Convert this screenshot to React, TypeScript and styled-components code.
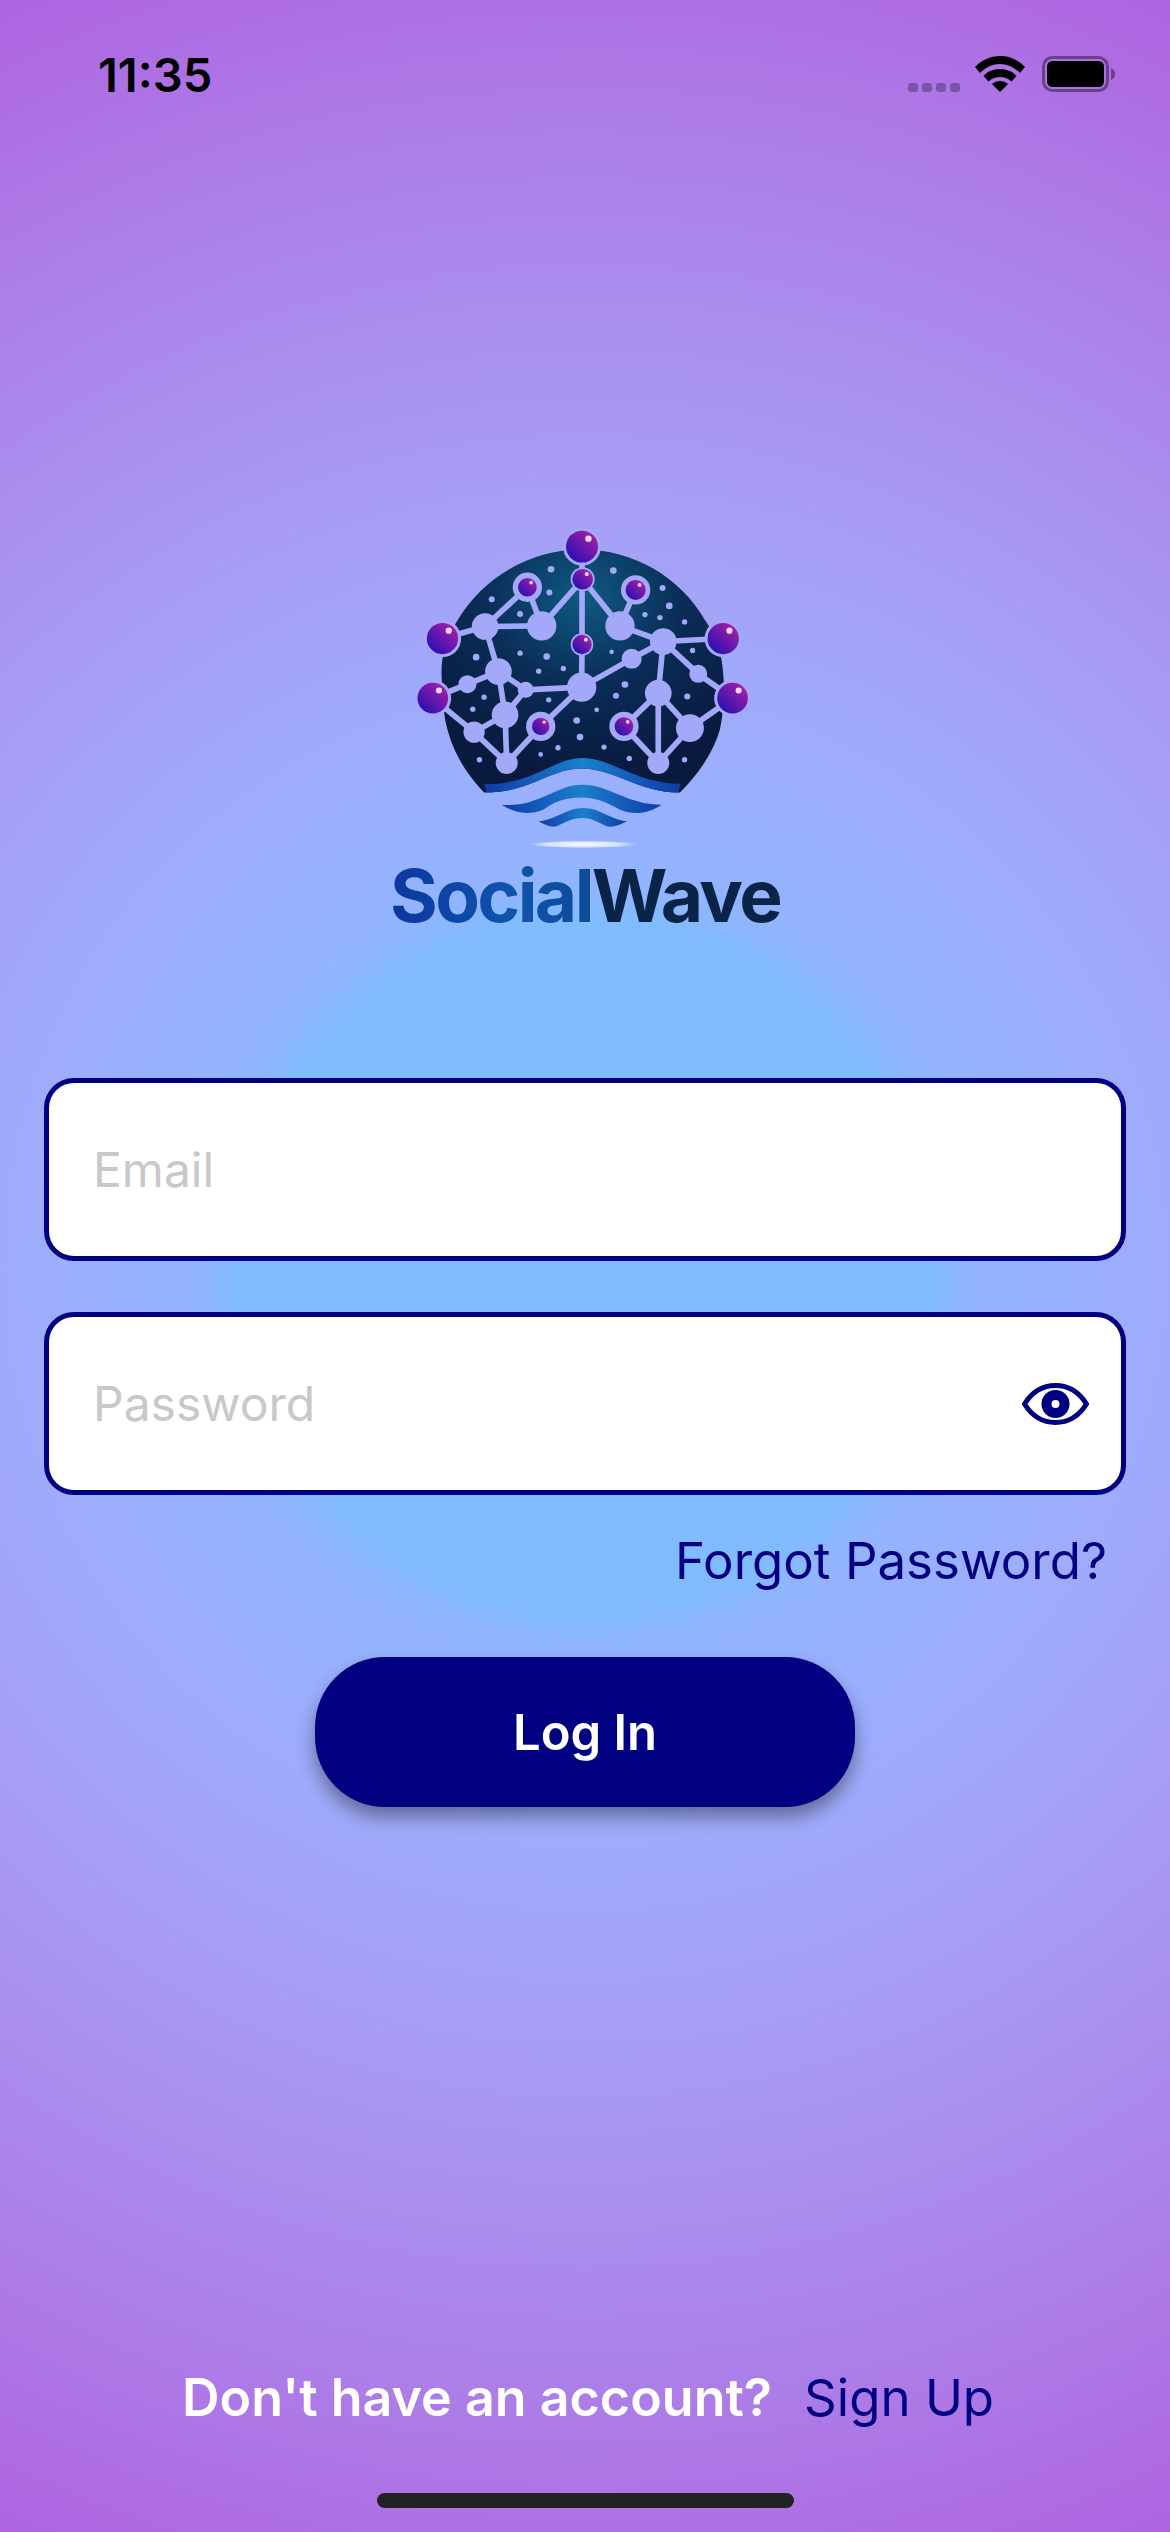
import React from "react";
import styled, { createGlobalStyle } from "styled-components";

const NAVY = "#000080";
const NODE = "#a4a8f8";

const GlobalStyle = createGlobalStyle`
  html, body { margin: 0; padding: 0; }
  body { font-family: Inter, "Liberation Sans", sans-serif; }
  * { box-sizing: border-box; }
`;

const Page = styled.div`
  width: 1170px;
  height: 2532px;
  overflow: hidden;
  display: flex;
  flex-direction: column;
  background: radial-gradient(
    circle at 585px 1266px,
    #80bbff 0,
    #80bbff 345px,
    #92b4ff 385px,
    #9eacfb 560px,
    #a89bf3 800px,
    #ac7fe8 1120px,
    #b064e0 1394px
  );
`;

const StatusBar = styled.div`
  height: 140px;
  padding: 48px 54px 0 98px;
  display: flex;
  justify-content: space-between;
  align-items: flex-start;
`;

const Time = styled.span`
  font-size: 47px;
  line-height: 54px;
  font-weight: 600;
  color: #000;
`;

const StatusIcons = styled.div`
  display: flex;
  align-items: flex-end;
  margin-top: 8px;
`;

const SignalDots = styled.div`
  display: flex;
  gap: 4px;
  margin-right: 15px;
`;

const SignalDot = styled.span`
  width: 10px;
  height: 9px;
  border-radius: 3px;
  background: rgba(0, 0, 0, 0.28);
`;

const Brand = styled.div`
  margin-top: 360px;
  display: flex;
  flex-direction: column;
  align-items: center;
`;

const Wordmark = styled.div`
  margin-top: 4px;
  height: 78px;
  font-family: Inter, "Liberation Sans", sans-serif;
  font-size: 73px;
  line-height: 78px;
  font-weight: 700;
  letter-spacing: -2.6px;
  white-space: nowrap;
`;

const WordSocial = styled.span`
  background: linear-gradient(90deg, #0c369f, #0f54ac 60%, #0e4a96);
  -webkit-background-clip: text;
  background-clip: text;
  color: transparent;
`;

const WordWave = styled.span`
  color: #0a2448;
`;

const Form = styled.div`
  margin-top: 143px;
  padding: 0 44px;
  display: flex;
  flex-direction: column;
  gap: 51px;
`;

const InputBox = styled.div`
  height: 183px;
  padding: 0 32px 0 44px;
  display: flex;
  align-items: center;
  background: #fff;
  border: 5px solid ${NAVY};
  border-radius: 30px;
`;

const Field = styled.input`
  flex: 1;
  min-width: 0;
  border: none;
  outline: none;
  background: transparent;
  padding: 0;
  font-family: Inter, "Liberation Sans", sans-serif;
  font-size: 48px;
  color: #222;

  &::placeholder {
    color: #c8c8c8;
    opacity: 1;
  }
`;

const ForgotRow = styled.div`
  margin-top: 36px;
  padding-right: 63px;
  display: flex;
  justify-content: flex-end;
`;

const Forgot = styled.span`
  font-size: 51px;
  line-height: 60px;
  color: ${NAVY};
`;

const LoginButton = styled.button`
  display: block;
  width: 540px;
  height: 150px;
  margin: 66px auto 0;
  border: none;
  border-radius: 70px;
  background: ${NAVY};
  color: #fff;
  font-family: Inter, "Liberation Sans", sans-serif;
  font-size: 49px;
  font-weight: 600;
  box-shadow: 0 10px 18px rgba(0, 0, 0, 0.38);
`;

const Footer = styled.div`
  margin-top: auto;
  margin-bottom: 104px;
  padding-left: 182px;
  display: flex;
  align-items: baseline;
  gap: 32px;
  font-size: 52px;
  line-height: 60px;
`;

const FooterText = styled.span`
  color: #fff;
  font-weight: 600;
`;

const FooterLink = styled.span`
  color: ${NAVY};
  font-size: 51px;
`;

const HomeBar = styled.div`
  position: absolute;
  left: 377px;
  top: 2493px;
  width: 417px;
  height: 15px;
  border-radius: 8px;
  background: #222;
`;

const lines = [
  [606, 140, 606, 434], [608, 238, 485, 378], [608, 238, 720, 378], [442, 262, 315, 380], [442, 262, 485, 378],
  [767, 270, 720, 378], [187, 416, 315, 380], [315, 380, 485, 378], [720, 378, 850, 425], [1030, 416, 850, 425],
  [315, 380, 355, 515], [355, 515, 262, 553], [262, 553, 158, 595], [355, 515, 437, 570], [437, 570, 605, 562],
  [606, 434, 605, 562], [605, 562, 755, 477], [755, 477, 850, 425], [850, 425, 835, 580], [850, 425, 955, 522],
  [955, 522, 1058, 595], [355, 515, 375, 645], [437, 570, 375, 645], [375, 645, 282, 697], [158, 595, 282, 697],
  [282, 697, 380, 790], [375, 645, 380, 790], [380, 790, 482, 680], [482, 680, 605, 562], [835, 580, 732, 680],
  [732, 680, 835, 790], [835, 580, 835, 790], [835, 580, 930, 685], [930, 685, 1058, 595], [930, 685, 835, 790],
];

const nodes = [
  [315, 380, 40], [485, 378, 44], [720, 378, 44], [850, 425, 40], [355, 515, 40], [262, 553, 27],
  [437, 570, 24], [605, 562, 44], [755, 477, 30], [835, 580, 40], [955, 522, 27], [375, 645, 40],
  [282, 697, 32], [380, 790, 33], [835, 790, 33], [930, 685, 42],
];

const ringBalls = [
  [442, 262, 44, 28], [608, 238, 36, 31], [767, 270, 44, 30], [606, 434, 34, 29], [482, 680, 44, 26], [732, 680, 44, 28],
];

const outerBalls = [
  [606, 140, 48], [187, 416, 47], [1030, 416, 47], [158, 595, 46], [1058, 595, 46],
];

const dots = [
  [513, 208, 10], [700, 212, 10], [508, 278, 9], [335, 298, 9], [848, 264, 9], [868, 318, 10], [795, 344, 8],
  [840, 353, 8], [914, 366, 8], [420, 342, 9], [288, 472, 10], [420, 460, 8], [500, 470, 10], [476, 514, 8],
  [550, 506, 8], [695, 456, 7], [938, 452, 8], [735, 554, 10], [708, 588, 9], [922, 590, 9], [506, 600, 8],
  [312, 592, 8], [278, 628, 8], [650, 630, 7], [590, 662, 10], [600, 712, 10], [534, 744, 8], [482, 764, 7],
  [672, 742, 8], [748, 776, 8], [298, 780, 8], [914, 780, 8],
];

const Ball = ({ x, y, r }: { x: number; y: number; r: number }) => (
  <g>
    <circle cx={x} cy={y} r={r} fill="url(#ballFill)" />
    <circle cx={x + r * 0.4} cy={y - r * 0.5} r={r * 0.2} fill="#f0d8f5" />
  </g>
);

const Logo = () => (
  <svg width="420" height="353" viewBox="-15 0 1260 1060">
    <defs>
      <radialGradient id="domeFill" cx="0.5" cy="0.2" r="0.72">
        <stop offset="0" stopColor="#0f5a82" />
        <stop offset="0.5" stopColor="#0a2c56" />
        <stop offset="1" stopColor="#091a3e" />
      </radialGradient>
      <linearGradient id="ballFill" x1="0.9" y1="0.1" x2="0.15" y2="0.9">
        <stop offset="0" stopColor="#a61fa8" />
        <stop offset="1" stopColor="#2a10b0" />
      </linearGradient>
      <linearGradient id="waveFill" x1="0" y1="0" x2="1" y2="0">
        <stop offset="0" stopColor="#0f3aa8" />
        <stop offset="0.5" stopColor="#1a80cc" />
        <stop offset="1" stopColor="#0f3aa8" />
      </linearGradient>
      <radialGradient id="glareFill">
        <stop offset="0" stopColor="#ffffff" />
        <stop offset="0.7" stopColor="#e8eefc" stopOpacity="0.8" />
        <stop offset="1" stopColor="#ffffff" stopOpacity="0" />
      </radialGradient>
    </defs>
    <path
      d="M606 148 C 450 150 310 230 230 365 C 195 420 180 480 185 540 C 188 610 190 650 205 700 C 225 770 265 830 312 878 L 320 878 C 450 878 510 806 605 806 C 700 806 780 878 895 878 L 900 878 C 950 830 1000 760 1020 690 C 1035 620 1035 540 1025 480 C 1015 430 1000 395 975 360 C 900 230 760 150 606 148 Z"
      fill="url(#domeFill)"
    />
    <g stroke={NODE} strokeWidth="17" strokeLinecap="round">
      {lines.map(([x1, y1, x2, y2], i) => (
        <line key={i} x1={x1} y1={y1} x2={x2} y2={y2} />
      ))}
    </g>
    <g fill={NODE}>
      {nodes.map(([x, y, r], i) => (
        <circle key={i} cx={x} cy={y} r={r} />
      ))}
      {dots.map(([x, y, r], i) => (
        <circle key={i} cx={x} cy={y} r={r} />
      ))}
      {ringBalls.map(([x, y, r], i) => (
        <circle key={i} cx={x} cy={y} r={r} />
      ))}
      {outerBalls.map(([x, y, r], i) => (
        <circle key={i} cx={x} cy={y} r={r + 9} />
      ))}
    </g>
    {ringBalls.map(([x, y, , r], i) => (
      <Ball key={i} x={x} y={y} r={r} />
    ))}
    {outerBalls.map(([x, y, r], i) => (
      <Ball key={i} x={x} y={y} r={r} />
    ))}
    <path
      d="M312 852 C 450 860 520 775 605 775 C 700 775 760 850 902 852 L 895 878 C 780 878 700 806 605 806 C 510 806 450 878 320 878 Z"
      fill="url(#waveFill)"
    />
    <path
      d="M365 915 C 470 925 530 855 605 855 C 690 855 740 915 845 915 C 800 945 760 945 720 930 C 680 905 640 893 605 893 C 560 893 520 905 490 930 C 450 945 410 945 365 915 Z"
      fill="url(#waveFill)"
    />
    <path
      d="M475 965 C 530 960 560 925 610 925 C 660 925 690 960 742 965 C 720 975 700 985 680 980 C 650 965 630 955 610 955 C 580 955 560 965 530 980 C 515 985 495 975 475 965 Z"
      fill="url(#waveFill)"
    />
    <ellipse cx="610" cy="1034" rx="160" ry="11" fill="url(#glareFill)" />
  </svg>
);

const WifiIcon = () => (
  <svg width="50" height="36" viewBox="0 0 50 36" style={{ marginRight: 17 }}>
    <path d="M25 0 C 15 0 7 4 0 11 L 5 17 C 11 11 18 8 25 8 C 32 8 39 11 45 17 L 50 11 C 43 4 35 0 25 0 Z" fill="#000" />
    <path d="M25 13 C 19 13 13 15 8.500 20 L 13.500 25.500 C 16.500 22.500 20.500 21 25 21 C 29.500 21 33.500 22.500 36.500 25.500 L 41.500 20 C 37 15 31 13 25 13 Z" fill="#000" />
    <path d="M25 25 C 22 25 19.500 26 17 28 L 25 36 L 33 28 C 30.500 26 28 25 25 25 Z" fill="#000" />
  </svg>
);

const BatteryIcon = () => (
  <svg width="74" height="36" viewBox="0 0 74 36">
    <rect x="1.500" y="1.500" width="64" height="33" rx="9" fill="none" stroke="#000" strokeOpacity="0.4" strokeWidth="3" />
    <rect x="5" y="5" width="57" height="26" rx="5.500" fill="#000" />
    <path d="M69 12 C 72 13 73 15.500 73 18 C 73 20.500 72 23 69 24 Z" fill="#000" fillOpacity="0.4" />
  </svg>
);

const EyeIcon = () => (
  <svg width="67" height="42" viewBox="0 0 67 42">
    <path
      d="M2.500 21 C 10 9 21 2.500 33.500 2.500 C 46 2.500 57 9 64.500 21 C 57 33 46 39.500 33.500 39.500 C 21 39.500 10 33 2.500 21 Z"
      fill="none"
      stroke={NAVY}
      strokeWidth="5"
      strokeLinejoin="round"
    />
    <circle cx="33.500" cy="21" r="9" fill="none" stroke={NAVY} strokeWidth="10" />
  </svg>
);

export default function App() {
  return (
    <Page>
      <GlobalStyle />
      <StatusBar>
        <Time>11:35</Time>
        <StatusIcons>
          <SignalDots>
            <SignalDot />
            <SignalDot />
            <SignalDot />
            <SignalDot />
          </SignalDots>
          <WifiIcon />
          <BatteryIcon />
        </StatusIcons>
      </StatusBar>
      <Brand>
        <Logo />
        <Wordmark>
          <WordSocial>Social</WordSocial>
          <WordWave>Wave</WordWave>
        </Wordmark>
      </Brand>
      <Form>
        <InputBox>
          <Field placeholder="Email" />
        </InputBox>
        <InputBox>
          <Field placeholder="Password" type="password" />
          <EyeIcon />
        </InputBox>
      </Form>
      <ForgotRow>
        <Forgot>Forgot Password?</Forgot>
      </ForgotRow>
      <LoginButton>Log In</LoginButton>
      <Footer>
        <FooterText>Don't have an account?</FooterText>
        <FooterLink>Sign Up</FooterLink>
      </Footer>
      <HomeBar />
    </Page>
  );
}
